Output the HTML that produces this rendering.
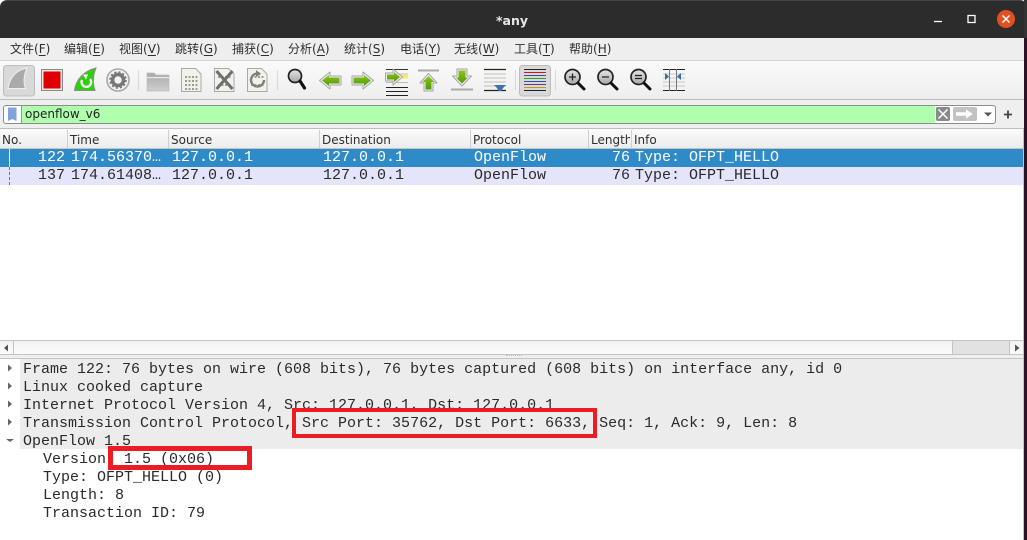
<!DOCTYPE html>
<html><head><meta charset="utf-8"><style>
html,body{margin:0;padding:0;background:#fff}
body{width:1027px;height:540px;position:relative;overflow:hidden;font-family:"DejaVu Sans","Liberation Sans",sans-serif}
div{position:absolute;box-sizing:border-box}
.m{top:41px;font:12px/17px "DejaVu Sans","Noto Sans CJK SC",sans-serif;color:#2e2e2e;white-space:nowrap}
.m u{text-underline-offset:2px}
.h{top:131px;height:17px;font:12px/18px "DejaVu Sans",sans-serif;color:#2e2e2e;white-space:nowrap}
.s{top:130px;width:1px;height:18px;background:#cfcfcf}
.t{font:15px/18px "Liberation Mono",monospace;white-space:pre;color:#2a2a2a}
.w{color:#fff}
.r{border:4px solid #ed1c24;background:transparent}
</style></head><body>
<div style="left:0;top:0;width:1027px;height:38px;background:#2c2c2c;border-top:1px solid #444;border-radius:7px 7px 0 0"></div>
<div style="left:0;top:11px;width:1024px;text-align:center;font:bold 12.5px/19px 'DejaVu Sans',sans-serif;color:#e8e8e8">*any</div>
<svg style="position:absolute;left:925px;top:5px" width="100" height="30"><path d="M9 16.500h8" stroke="#fff" stroke-width="1.300"/><rect x="43" y="10.500" width="7" height="7" fill="none" stroke="#fff" stroke-width="1.300"/><circle cx="81" cy="14" r="9" fill="#e2501f"/><path d="M77.500 10.500l7 7m0-7l-7 7" stroke="#fff" stroke-width="1.500"/></svg>

<div style="left:0;top:38px;width:1024px;height:23px;background:#eee;border-bottom:1px solid #d2d2d2"></div>
<div class="m" style="left:10px">文件(<u>F</u>)</div>
<div class="m" style="left:64px">编辑(<u>E</u>)</div>
<div class="m" style="left:119px">视图(<u>V</u>)</div>
<div class="m" style="left:175px">跳转(<u>G</u>)</div>
<div class="m" style="left:232px">捕获(<u>C</u>)</div>
<div class="m" style="left:288px">分析(<u>A</u>)</div>
<div class="m" style="left:344px">统计(<u>S</u>)</div>
<div class="m" style="left:400px">电话(<u>Y</u>)</div>
<div class="m" style="left:454px">无线(<u>W</u>)</div>
<div class="m" style="left:514px">工具(<u>T</u>)</div>
<div class="m" style="left:569px">帮助(<u>H</u>)</div>

<div style="left:0;top:61px;width:1024px;height:39px;background:linear-gradient(#fafafa,#eeeeee);border-bottom:1px solid #bdbdbd"></div>
<svg style="position:absolute;left:0;top:0" width="700" height="100">
<defs><linearGradient id="g" x1="0" y1="0" x2="0" y2="1"><stop offset="0" stop-color="#8fc31f"/><stop offset="1" stop-color="#4f9a08"/></linearGradient>
<linearGradient id="f" x1="0" y1="0" x2="0" y2="1"><stop offset="0" stop-color="#a9a9a9"/><stop offset="1" stop-color="#cfcfcf"/></linearGradient>
<linearGradient id="z" x1="0" y1="0" x2="0" y2="1"><stop offset="0" stop-color="#e4e4e4"/><stop offset="1" stop-color="#a8a8a8"/></linearGradient></defs>
<rect x="3.500" y="65.500" width="31" height="30.500" rx="3" fill="#d9d9d9" stroke="#bcbcbc"/>
<path d="M8 88.500C10 76 17 70 27 68C24 74 23 82 25.500 88.500Z" fill="#aaa" stroke="#f0f0f0"/>
<rect x="41.500" y="69.500" width="21" height="21" fill="#e9e9e9" stroke="#8a8a8a"/><rect x="43.500" y="71.500" width="17" height="17" fill="#e00000"/>
<path d="M74.500 90.500C76 79 84 71 96 68C93 75 92.500 83 95 90.500Z" fill="#2fcf10" stroke="#8a8a8a"/>
<path d="M90 79a4.800 4.800 0 1 1-8 1" fill="none" stroke="#fff" stroke-width="2.400"/><path d="M83 74.500l3 5 2-5z" fill="#fff"/>
<circle cx="118" cy="80" r="11" fill="#f4f4f4" stroke="#a8a8a8" stroke-width="1.600"/><circle cx="118" cy="80" r="5.500" fill="none" stroke="#777" stroke-width="3.600"/><circle cx="118" cy="80" r="8" fill="none" stroke="#777" stroke-width="1.600" stroke-dasharray="2.200 2"/>
<path d="M138.500 70v20M277.500 70v20M515.500 70v20M555.500 70v20" stroke="#d8d8d8"/>
<path d="M147 91V73h7l2 2h13v16z" fill="url(#f)" stroke="#bbb" stroke-width=".7"/><rect x="147" y="77" width="22" height="1.200" fill="#e8e8e8"/>
<g fill="#f2f2ea" stroke="#a8a8a8"><path d="M181.500 68.500h14l5.500 5.500v17.500h-19.500z"/><path d="M214.500 68.500h14l5.500 5.500v17.500h-19.500z"/><path d="M247.500 68.500h14l5.500 5.500v17.500h-19.500z"/></g>
<g stroke="#9a9a9a" stroke-width="2" stroke-dasharray="2 1.500"><path d="M185 77h13M185 81h13M185 85h13M185 89h13M218 77h13M218 85h13M251 77h13M251 85h13"/></g>
<path d="M216.500 71l16 18m0-18l-16 18" stroke="#6f6f6f" stroke-width="3"/>
<path d="M260 74a6.500 6.500 0 1 0 4 6" fill="none" stroke="#7f7f7f" stroke-width="2.400"/><path d="M256 70l5 4-5 3z" fill="#7f7f7f"/>
<circle cx="295" cy="76" r="6.500" fill="url(#z)" stroke="#222" stroke-width="1.700"/><path d="M300 81l4.500 7" stroke="#111" stroke-width="3.200" stroke-linecap="round"/>

<path d="M386 74h22M386 78h22M386 82.500h22" stroke="#bdbdb2"/><path d="M386 69.500h22" stroke="#333"/><path d="M386 87.500h22M386 91.500h22M386 95.500h22" stroke="#222"/><rect x="401" y="75" width="7" height="3.500" fill="#ffe95a"/>
<path d="M418 70.500h21" stroke="#aaa" stroke-width="2"/>
<path d="M451 89.500h22" stroke="#aaa" stroke-width="2"/>
<g stroke="#a4a4a4" fill="#f0f0f0" stroke-linejoin="round">
<path d="M319.500 80.500L330 72V76H341V85H330V89Z"/>
<path d="M373.500 80.500L363 72V76H352V85H363V89Z"/>
<path d="M402.500 77L393 69V73H385.500V81H393V85Z"/>
<path d="M428.500 73.500L437 83H433V91H424V83H420Z"/>
<path d="M462 86L471.500 76H467V69H457V76H452.500Z"/></g>
<g fill="url(#g)">
<path d="M322 80.500L329 75V77.500H339.500V83.500H329V86Z"/>
<path d="M371 80.500L364 75V77.500H353.500V83.500H364V86Z"/>
<path d="M400 77L394 72V74.500H387V79.500H394V82Z"/>
<path d="M428.500 76L434.500 82H431.500V89.500H425.500V82H422.500Z"/>
<path d="M462 83.500L468 77.500H465.500V70.500H458.500V77.500H456Z"/></g>
<path d="M484 69.500h22M484 90.500h22" stroke="#222" stroke-width="1.200"/><path d="M484 74h22M484 78h22M484 82h22M484 86h22" stroke="#c9c9bf" stroke-width="1.300"/><path d="M494 85h12l-3 3-1.500 3h-3l-1.500-3z" fill="#3f6fae"/>
<rect x="519.500" y="65.500" width="31" height="30.500" rx="3" fill="#d9d9d9" stroke="#bcbcbc"/>
<g stroke-width="1"><path d="M524 69.500h22" stroke="#222"/><path d="M524 72.500h22" stroke="#e01010"/><path d="M524 75.500h22" stroke="#2a4fb0"/><path d="M524 78.500h22" stroke="#3aa010"/><path d="M524 81.500h22" stroke="#2a4fb0"/><path d="M524 84.500h22" stroke="#70308a"/><path d="M524 87.500h22" stroke="#b8a010"/><path d="M524 90.500h22" stroke="#222"/></g>
<g fill="url(#z)" stroke="#222" stroke-width="1.700"><circle cx="572.500" cy="77" r="7.500"/><circle cx="605.500" cy="77" r="7.500"/><circle cx="638.500" cy="77" r="7.500"/></g>
<path d="M578 83l6 6M611 83l6 6M644 83l6 6" stroke="#111" stroke-width="3" stroke-linecap="round"/>
<path d="M569 77h7M572.500 73.500v7M602 77h7M635 75.500h7M635 78.500h7" stroke="#222" stroke-width="1.300"/>
<path d="M663 69.500h22M663 90.500h22" stroke="#222"/><path d="M663 74h22M663 78h22M663 82h22M663 86h22" stroke="#c9c9bf"/><path d="M669.500 69v22M676.500 69v22" stroke="#777"/><path d="M665 73l4 3.500-4 3.500zM681 73l-4 3.500 4 3.500z" fill="#2f6fb5"/>
</svg>

<div style="left:0;top:100px;width:1024px;height:29px;background:#efefef;border-bottom:1px solid #bdbdbd"></div>
<div style="left:3px;top:105px;width:993px;height:19px;background:#fff;border:1px solid #8b8b8b;border-radius:3px"></div>
<div style="left:22px;top:106px;width:913px;height:17px;background:#afffaf"></div>
<div style="left:21px;top:106px;width:1px;height:17px;background:#999"></div>
<svg style="position:absolute;left:4px;top:106px" width="17" height="17"><path d="M4 1.500h8.500v13.500l-4.200-2-4.300 2z" fill="#7ea4d8"/></svg>
<div style="left:25px;top:106px;font:12px/17px 'DejaVu Sans',sans-serif;color:#222">openflow_v6</div>
<svg style="position:absolute;left:935px;top:106px" width="90" height="17"><rect x="1" y="1" width="14" height="14" rx="2" fill="#8a8a8a"/><path d="M3.500 3.500l9 9m0-9l-9 9" stroke="#fff" stroke-width="1.500"/><rect x="18" y="1" width="24" height="14" rx="2" fill="#c2c2c2"/><path d="M21 8h11" stroke="#fff" stroke-width="3.500"/><path d="M31 3.500l7 4.500-7 4.500z" fill="#fff"/><path d="M49 6.500h8l-4 4z" fill="#555"/><path d="M73 4.500v8M69 8.500h8" stroke="#444" stroke-width="1.800"/></svg>

<div style="left:0;top:129px;width:1024px;height:20px;background:linear-gradient(#fbfbfb,#ececec);border-bottom:1px solid #c4c4c4"></div>
<div class="s" style="left:67px"></div><div class="s" style="left:168px"></div><div class="s" style="left:319px"></div><div class="s" style="left:470px"></div><div class="s" style="left:588px"></div><div class="s" style="left:631px"></div>
<div class="h" style="left:2px">No.</div><div class="h" style="left:70px">Time</div><div class="h" style="left:171px">Source</div><div class="h" style="left:322px">Destination</div><div class="h" style="left:473px">Protocol</div><div class="h" style="left:591px;width:39px;overflow:hidden">Length</div><div class="h" style="left:634px">Info</div>

<div style="left:0;top:149px;width:1024px;height:18px;background:#2e8bc8"></div>
<div style="left:0;top:167px;width:1024px;height:18px;background:#e4e4fb"></div>
<div style="left:9px;top:149px;width:1px;height:18px;background:#fff"></div>
<div style="left:9px;top:167px;width:0;height:18px;border-left:1px dashed #777"></div>
<div class="t w" style="left:38px;top:149px">122</div><div class="t w" style="left:71px;top:149px">174.56370…</div><div class="t w" style="left:172px;top:149px">127.0.0.1</div><div class="t w" style="left:323px;top:149px">127.0.0.1</div><div class="t w" style="left:474px;top:149px">OpenFlow</div><div class="t w" style="left:612px;top:149px">76</div><div class="t w" style="left:635px;top:149px">Type: OFPT_HELLO</div>
<div class="t" style="left:38px;top:167px">137</div><div class="t" style="left:71px;top:167px">174.61408…</div><div class="t" style="left:172px;top:167px">127.0.0.1</div><div class="t" style="left:323px;top:167px">127.0.0.1</div><div class="t" style="left:474px;top:167px">OpenFlow</div><div class="t" style="left:612px;top:167px">76</div><div class="t" style="left:635px;top:167px">Type: OFPT_HELLO</div>

<div style="left:0;top:340px;width:1024px;height:15px;background:linear-gradient(#f2f2f2,#fbfbfb);border-top:1px solid #c4c4c4;border-bottom:1px solid #c4c4c4"></div>
<div style="left:13px;top:340px;width:1px;height:15px;background:#c4c4c4"></div>
<div style="left:952px;top:341px;width:58px;height:13px;background:#e2e2e2;border-left:1px solid #c4c4c4;border-right:1px solid #c4c4c4"></div>
<svg style="position:absolute;left:0;top:341px" width="1024" height="14"><path d="M8 3.500v7l-4-3.500zM1015 3.500v7l4.500-3.500z" fill="#555"/></svg>
<div style="left:0;top:355px;width:1024px;height:4px;background:#efefef;border-bottom:1px solid #c4c4c4"></div>
<div style="left:506px;top:355px;width:16px;height:2px;border-top:1px dotted #bbb"></div>

<div style="left:0;top:359px;width:1024px;height:90px;background:#fff"></div>
<div style="left:20px;top:359px;width:1004px;height:90px;background:#ececec"></div>
<svg style="position:absolute;left:0;top:359px" width="20" height="92"><path d="M8 5.500v7l4-3.500zM8 23.500v7l4-3.500zM8 41.500v7l4-3.500zM8 59.500v7l4-3.500zM6 80h8l-4 3z" fill="#666"/></svg>
<div class="t" style="left:23px;top:361px">Frame 122: 76 bytes on wire (608 bits), 76 bytes captured (608 bits) on interface any, id 0</div>
<div class="t" style="left:23px;top:379px">Linux cooked capture</div>
<div class="t" style="left:23px;top:397px">Internet Protocol Version 4, Src: 127.0.0.1, Dst: 127.0.0.1</div>
<div class="t" style="left:23px;top:415px">Transmission Control Protocol, Src Port: 35762, Dst Port: 6633, Seq: 1, Ack: 9, Len: 8</div>
<div class="t" style="left:23px;top:433px">OpenFlow 1.5</div>
<div class="t" style="left:43px;top:451px">Version: 1.5 (0x06)</div>
<div class="t" style="left:43px;top:469px">Type: OFPT_HELLO (0)</div>
<div class="t" style="left:43px;top:487px">Length: 8</div>
<div class="t" style="left:43px;top:505px">Transaction ID: 79</div>
<div class="r" style="left:292px;top:408px;width:305px;height:30px"></div>
<div class="r" style="left:108px;top:446px;width:144px;height:24px;border-width:5px"></div>

<div style="left:1023px;top:129px;width:1px;height:411px;background:#c4c4c4"></div>
<div style="left:1024px;top:0;width:3px;height:540px;background:#2a1325"></div>
<div style="left:1024px;top:0;width:3px;height:38px;background:#333"></div>
</body></html>
